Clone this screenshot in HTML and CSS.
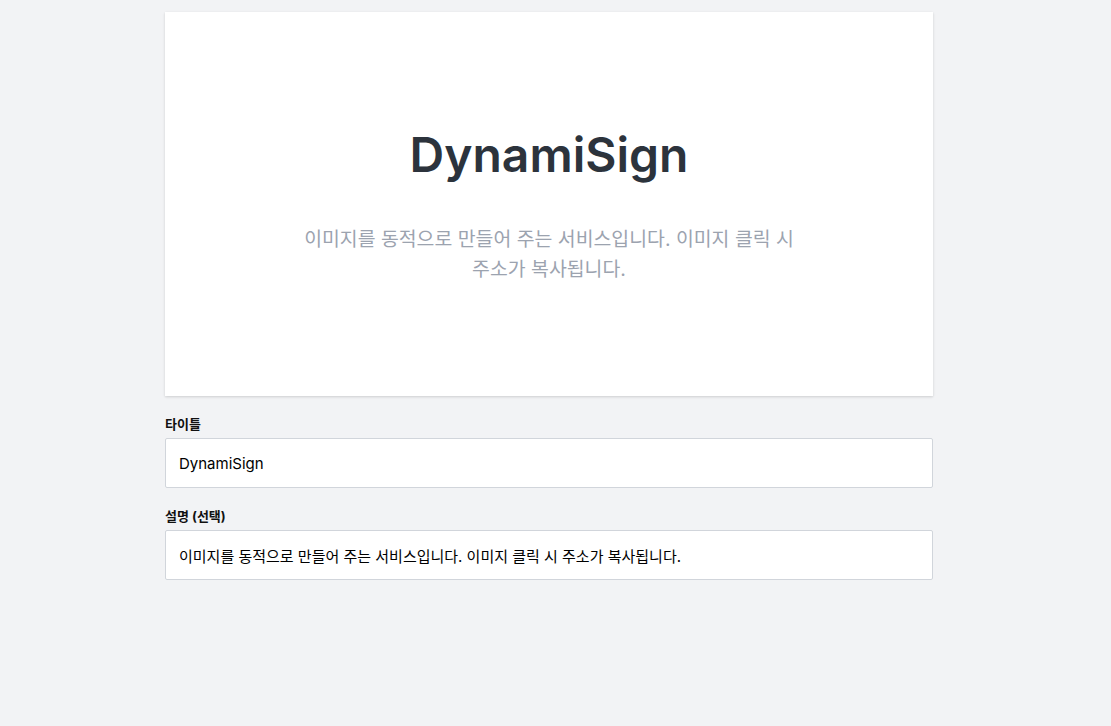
FILE: index.html
```html
<!DOCTYPE html>
<html lang="ko">
<head>
<meta charset="utf-8">
<title>DynamiSign</title>
<link rel="stylesheet" href="styles.css">
</head>
<body>
<main class="page">
  <section class="card">
    <h1 class="card-title">DynamiSign</h1>
    <p class="card-desc">이미지를 동적으로 만들어 주는 서비스입니다. 이미지 클릭 시 주소가 복사됩니다.</p>
  </section>
  <div class="field">
    <label class="field-label" for="title">타이틀</label>
    <input class="field-input" id="title" type="text" value="DynamiSign">
  </div>
  <div class="field">
    <label class="field-label" for="desc">설명 (선택)</label>
    <input class="field-input" id="desc" type="text" value="이미지를 동적으로 만들어 주는 서비스입니다. 이미지 클릭 시 주소가 복사됩니다.">
  </div>
</main>
</body>
</html>
```
FILE: styles.css
```css
html, body {
  margin: 0;
  padding: 0;
  background: #f2f3f5;
  font-family: Inter, "Noto Sans CJK KR", sans-serif;
}
.page {
  width: 768px;
  margin-left: 165px;
  padding-top: 12px;
}
.card {
  height: 384px;
  box-sizing: border-box;
  padding-top: 3px;
  background: #fff;
  box-shadow: 0 1px 3px rgba(0,0,0,0.1), 0 1px 2px rgba(0,0,0,0.06);
  display: flex;
  flex-direction: column;
  align-items: center;
  justify-content: center;
  text-align: center;
}
.card-title {
  margin: 0;
  font-size: 48px;
  font-weight: 600;
  color: #2c333c;
  line-height: 56px;
}
.card-desc {
  margin: 41px 0 0;
  max-width: 500px;
  font-size: 19.4px;
  line-height: 30px;
  color: #9ca3af;
}
.field {
  margin-top: 20px;
  display: flex;
  flex-direction: column;
}
.field + .field { margin-top: 20px; }
.field-label {
  font-size: 13px;
  font-weight: 700;
  color: #111;
  line-height: 16px;
  margin-bottom: 6px;
}
.field-input {
  margin: 0;
  height: 50px;
  box-sizing: border-box;
  border: 1px solid #d1d5db;
  border-radius: 2px;
  background: #fff;
  padding: 0 13px;
  font-family: Inter, "Noto Sans CJK KR", sans-serif;
  font-size: 15px;
  color: #000;
  outline: none;
}
```
